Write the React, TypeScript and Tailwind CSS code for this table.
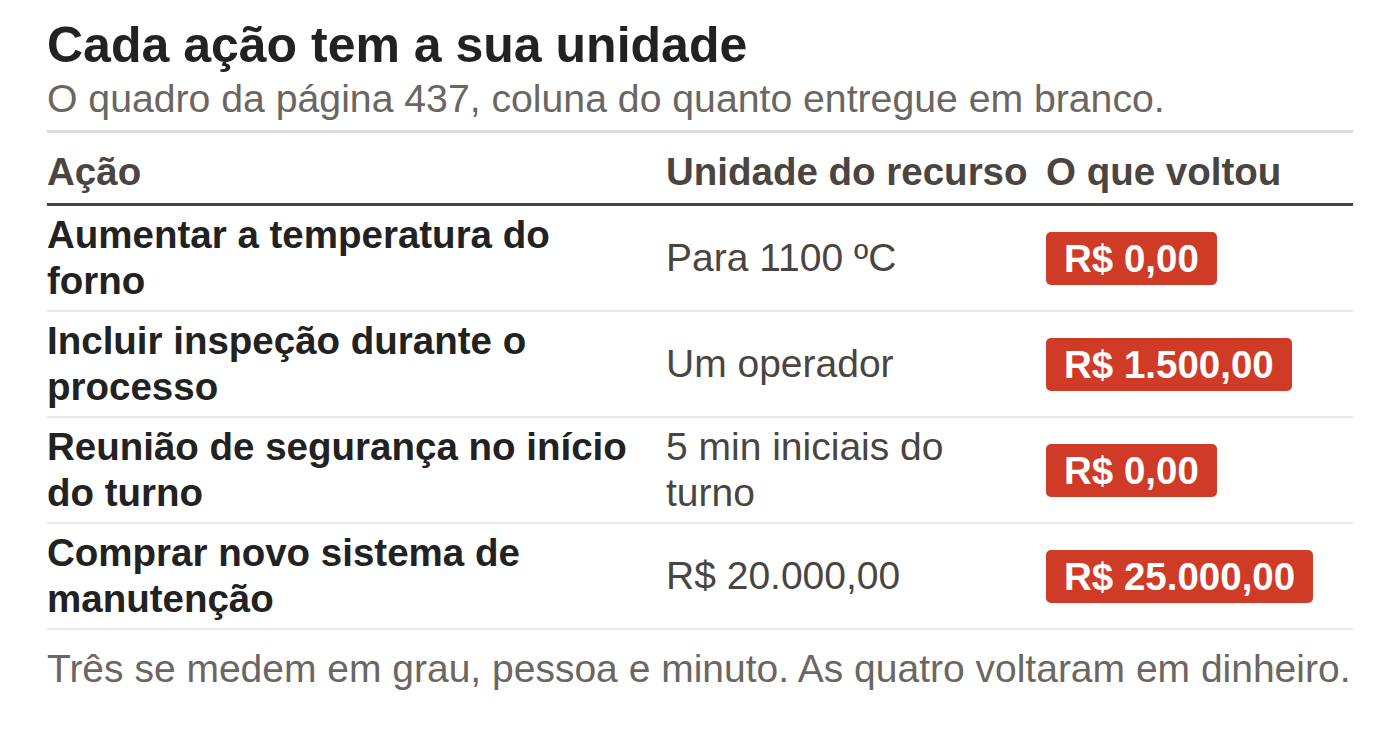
const rows = [
  { action: 'Aumentar a temperatura do forno', unit: 'Para 1100 ºC', back: 'R$ 0,00' },
  { action: 'Incluir inspeção durante o processo', unit: 'Um operador', back: 'R$ 1.500,00' },
  { action: 'Reunião de segurança no início do turno', unit: '5 min iniciais do turno', back: 'R$ 0,00' },
  { action: 'Comprar novo sistema de manutenção', unit: 'R$ 20.000,00', back: 'R$ 25.000,00' },
];

export default function App() {
  return (
    <div className="min-h-screen bg-white px-[47px] pt-[15px] font-['Liberation_Sans',Arial,sans-serif]">
      {/* Title */}
      <h1 className="text-[50px] leading-[60px] font-bold text-[#222]">Cada ação tem a sua unidade</h1>
      <p className="text-[39.2px] leading-[48px] text-[#6b6661] pb-[7px] border-b-[3px] border-[#dedbd8]">
        O quadro da página 437, coluna do quanto entregue em branco.
      </p>

      {/* Table */}
      <div className="grid grid-cols-[619px_380px_1fr]">
        <div className="contents text-[38.5px] font-bold text-[#4a4540]">
          <div className="pt-[16px] pb-[8px] border-b-[3px] border-[#4a4540] leading-[46px]">Ação</div>
          <div className="pt-[16px] pb-[8px] border-b-[3px] border-[#4a4540] leading-[46px]">Unidade do recurso</div>
          <div className="pt-[16px] pb-[8px] border-b-[3px] border-[#4a4540] leading-[46px]">O que voltou</div>
        </div>
        {rows.map((r, i) => (
          <div key={i} className="contents">
            <div className="py-[6px] pr-4 border-b-2 border-[#ebe9e7] text-[38.5px] leading-[46px] font-bold text-[#222] flex items-center">
              {r.action}
            </div>
            <div className="py-[6px] pr-4 border-b-2 border-[#ebe9e7] text-[39px] leading-[46px] text-[#4a4540] flex items-center">
              {r.unit}
            </div>
            <div className="py-[6px] border-b-2 border-[#ebe9e7] flex items-center">
              <span className="bg-[#cf3b27] text-white font-bold text-[38.5px] leading-[53px] px-[18px] rounded-[5px]">{r.back}</span>
            </div>
          </div>
        ))}
      </div>

      {/* Footer */}
      <p className="mt-[16px] text-[39px] leading-[46px] text-[#6b6661] whitespace-nowrap">
        Três se medem em grau, pessoa e minuto. As quatro voltaram em dinheiro.
      </p>
    </div>
  );
}
